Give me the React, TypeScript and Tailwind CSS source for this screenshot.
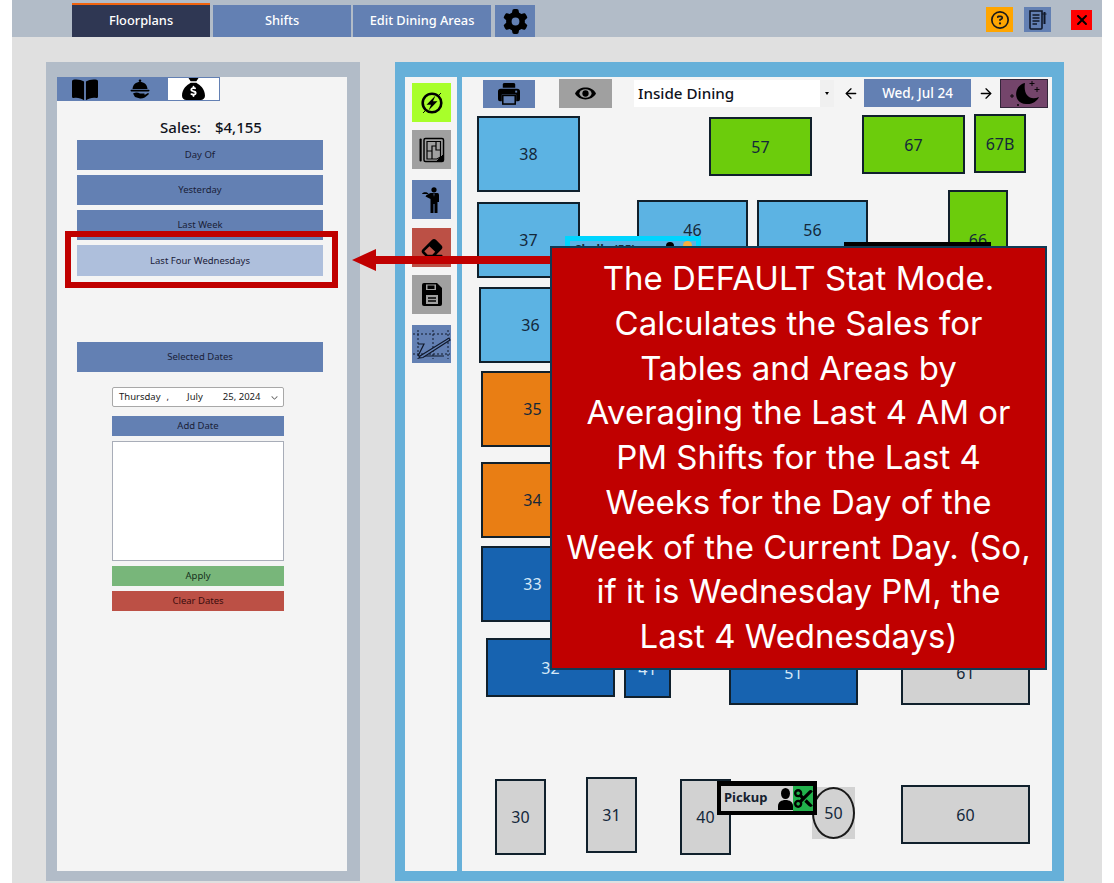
import React from "react";
import { FaSackDollar, FaGear, FaEraser, FaScissors, FaXmark, FaRegCircleQuestion, FaChevronDown } from "react-icons/fa6";
import { ArrowLeft, ArrowRight } from "lucide-react";

const BLUE = "bg-[#6380b3]";

function Book() {
  return (
    <svg width="26" height="23" viewBox="0 0 28 23">
      <path d="M13 3 C10 1 5 0 1.500 1 Q0 1.300 0 3 V19 Q0 21 2 20.600 C6 20 10 21 13 23Z" fill="#000" />
      <path d="M15 3 C18 1 23 0 26.500 1 Q28 1.300 28 3 V19 Q28 21 26 20.600 C22 20 18 21 15 23Z" fill="#000" />
    </svg>
  );
}

function Cloche() {
  return (
    <svg width="20" height="20" viewBox="0 0 20 20">
      <circle cx="10" cy="1.800" r="1.300" fill="#000" />
      <path d="M2.500 10 C2.800 5.500 6 3 10 3 C14 3 17.200 5.500 17.500 10Z" fill="#000" />
      <rect x="0.500" y="10.800" width="19" height="1.600" rx="0.800" fill="#000" />
      <path d="M3 14.500 C6 13 8 13.500 10 14.500 H14 C15 14.500 15 16 14 16 H10.500 L14.500 16 L18 14 C19 14 19 15 18.500 15.500 C16 18 13 19.800 10 19.500 L5 18Z" fill="#000" />
    </svg>
  );
}

function Bolt() {
  return (
    <svg width="26" height="26" viewBox="0 0 26 26" fill="none">
      <circle cx="13" cy="13" r="9.300" stroke="#000" strokeWidth="2.600" />
      <path d="M16.500 5.500 L7.500 14.800 H12 L9.500 20.500 L18.500 11.200 H14Z" fill="#000" />
      <path d="M4 23 L7 20 M19 6 L22 3" stroke="#000" strokeWidth="0.900" />
    </svg>
  );
}

function Plan() {
  return (
    <svg width="26" height="26" viewBox="0 0 26 26" fill="none" stroke="#000">
      <rect x="5" y="1.500" width="19.500" height="23" rx="1.500" strokeWidth="1.500" />
      <path d="M8 4.500 H21.500 V20 L18 22 H8Z M8 14 H13 V9 H17 V4.500 M17 9 V13 H21.500 M13 14 V22" strokeWidth="1.200" />
      <path d="M18 24 L24 24 L24 18Z" fill="#000" />
      <rect x="0.500" y="1.500" width="2.200" height="23" rx="1" fill="#000" stroke="none" />
    </svg>
  );
}

function Waiter() {
  return (
    <svg width="20" height="26" viewBox="0 0 20 26">
      <circle cx="12" cy="2.800" r="2.600" fill="#000" />
      <path d="M8.500 6 H15.500 Q17 6 17 8 V15 H15.500 V26 H12.500 V17 H11.500 V26 H8.500 V12 L3.500 9.500 L4.500 8Z" fill="#000" />
      <path d="M0 7 C0.500 4.500 6 4.500 6.500 7Z" fill="#000" />
      <path d="M11.500 6.500 L12 10 L12.500 6.500Z" fill="#6380b3" />
    </svg>
  );
}

function Drafting() {
  return (
    <svg width="39" height="38" viewBox="0 0 39 38" fill="none">
      <path d="M1 9 H38 M1 29 H38 M6 5 V34 M21 5 V34 M36 5 V34" stroke="#10182a" strokeWidth="1" strokeDasharray="2 2" />
      <path d="M6 31 L12 19 H6 M6 31 H32" stroke="#10182a" strokeWidth="1.200" />
      <path d="M8 31 L37 13 L38 15 L11 32.500 L7 33Z" fill="#6380b3" stroke="#10182a" strokeWidth="1.200" />
    </svg>
  );
}

function Notes() {
  return (
    <svg width="18" height="20" viewBox="0 0 18 20" fill="none" stroke="#10182a">
      <path d="M1 1 H13 V18 Q13 19 12 19 H2 Q1 19 1 18Z" strokeWidth="1.600" />
      <path d="M3.500 5 H10.500 M3.500 8 H10.500 M3.500 11 H10.500 M3.500 14 H8" strokeWidth="1.300" />
      <path d="M15.500 2 V14" strokeWidth="2" />
      <path d="M13 4 H17.500" strokeWidth="1" />
    </svg>
  );
}

function Moon() {
  return (
    <svg width="46" height="27" viewBox="1 1 46 27" fill="none">
      <path d="M25 4 C14 6 12 24 26 25 C33 25.500 37 22 39 18 C30 22 23 16 25 4Z" fill="#000" />
      <path d="M32 2 V7 M29.500 4.500 H34.500 M37 8 V13 M34.500 10.500 H39.500 M12 15 V19 M10 17 H14 M18 25 V27 M17 26 H19" stroke="#000" strokeWidth="0.900" />
    </svg>
  );
}

function Printer() {
  return (
    <svg width="22" height="22" viewBox="0 0 23 23">
      <path d="M5 1.500 Q5 0 7 0 H16 Q18 0 18 1.500 V5 H5Z" fill="#000" />
      <path d="M3 6 H20 Q23 6 23 9 V17 Q23 19 21 19 H19 V12 H4 V19 H2 Q0 19 0 17 V9 Q0 6 3 6Z" fill="#000" />
      <rect x="5" y="13" width="13" height="9" fill="#6380b3" stroke="#000" strokeWidth="1.600" />
      <rect x="18" y="8" width="2" height="2" fill="#6380b3" />
    </svg>
  );
}

function EyeIcon() {
  return (
    <svg width="21" height="13" viewBox="0 0 20 12">
      <path d="M0 6 C4 -1.500 16 -1.500 20 6 C16 13.500 4 13.500 0 6Z" fill="#000" />
      <ellipse cx="10" cy="6" rx="5.800" ry="4" fill="#a0a0a0" />
      <circle cx="10" cy="6" r="3" fill="#000" />
    </svg>
  );
}

function Floppy() {
  return (
    <svg width="20" height="23" viewBox="0 0 20 23">
      <path d="M2 0 H15 L20 5 V21 Q20 23 18 23 H2 Q0 23 0 21 V2 Q0 0 2 0Z" fill="#000" />
      <rect x="4" y="1.500" width="10" height="5.500" fill="#a0a0a0" />
      <rect x="5.500" y="2.500" width="7" height="3.500" fill="#000" />
      <rect x="4" y="12" width="12" height="9" fill="#a0a0a0" />
      <path d="M6 15 H14 M6 18 H14" stroke="#000" strokeWidth="1.300" />
    </svg>
  );
}

function Person() {
  return (
    <svg width="15" height="22" viewBox="0 0 15 22">
      <ellipse cx="7.500" cy="5.500" rx="4.500" ry="5.500" fill="#000" />
      <path d="M0 22 V18 C0 14 3.500 12 7.500 12 C11.500 12 15 14 15 18 V22Z" fill="#000" />
    </svg>
  );
}

type T = { n: string; c: string };
const tables: T[] = [
  { n: "38", c: "left-[15px] top-[39px] w-[103px] h-[76px] bg-[#5cb3e3] text-[#14283a]" },
  { n: "37", c: "left-[15px] top-[125px] w-[103px] h-[76px] bg-[#5cb3e3] text-[#14283a]" },
  { n: "36", c: "left-[17px] top-[210px] w-[103px] h-[76px] bg-[#5cb3e3] text-[#14283a]" },
  { n: "35", c: "left-[19px] top-[294px] w-[103px] h-[76px] bg-[#e97e14] text-[#14283a]" },
  { n: "34", c: "left-[19px] top-[385px] w-[103px] h-[76px] bg-[#e97e14] text-[#14283a]" },
  { n: "33", c: "left-[19px] top-[469px] w-[103px] h-[76px] bg-[#1763b0] text-[#d6e8f7]" },
  { n: "32", c: "left-[24px] top-[561px] w-[129px] h-[59px] bg-[#1763b0] text-[#d6e8f7]" },
  { n: "41", c: "left-[162px] top-[563px] w-[47px] h-[58px] bg-[#1763b0] text-[#d6e8f7]" },
  { n: "51", c: "left-[267px] top-[563px] w-[129px] h-[65px] bg-[#1763b0] text-[#d6e8f7]" },
  { n: "61", c: "left-[439px] top-[563px] w-[129px] h-[65px] bg-[#d2d2d2] text-[#14283a]" },
  { n: "46", c: "left-[175px] top-[123px] w-[111px] h-[60px] bg-[#5cb3e3] text-[#14283a]" },
  { n: "56", c: "left-[295px] top-[123px] w-[111px] h-[60px] bg-[#5cb3e3] text-[#14283a]" },
  { n: "57", c: "left-[247px] top-[40px] w-[103px] h-[59px] bg-[#6ccc0c] text-[#14283a]" },
  { n: "67", c: "left-[400px] top-[38px] w-[103px] h-[59px] bg-[#6ccc0c] text-[#14283a]" },
  { n: "67B", c: "left-[512px] top-[37px] w-[52px] h-[59px] bg-[#6ccc0c] text-[#14283a]" },
  { n: "66", c: "left-[486px] top-[113px] w-[60px] h-[100px] bg-[#6ccc0c] text-[#14283a]" },
  { n: "30", c: "left-[33px] top-[702px] w-[51px] h-[76px] bg-[#d2d2d2] text-[#14283a]" },
  { n: "31", c: "left-[124px] top-[700px] w-[51px] h-[76px] bg-[#d2d2d2] text-[#14283a]" },
  { n: "40", c: "left-[218px] top-[702px] w-[51px] h-[76px] bg-[#d2d2d2] text-[#14283a]" },
  { n: "60", c: "left-[439px] top-[708px] w-[129px] h-[59px] bg-[#d2d2d2] text-[#14283a]" },
];

const calloutLines = [
  "The DEFAULT Stat Mode.",
  "Calculates the Sales for",
  "Tables and Areas by",
  "Averaging the Last 4 AM or",
  "PM Shifts for the Last 4",
  "Weeks for the Day of the",
  "Week of the Current Day. (So,",
  "if it is Wednesday PM, the",
  "Last 4 Wednesdays)",
];

function StatButton({ label, light }: { label: string; light?: boolean }) {
  return (
    <div className={`w-[246px] flex items-center justify-center pt-[1px] text-[9.500px] text-[#1a2038] ${light ? "h-[31px] bg-[#aebfdc]" : `h-[30px] ${BLUE}`}`}>
      {label}
    </div>
  );
}

export default function App() {
  return (
    <div className="relative w-[1114px] h-[883px] bg-white pl-3 overflow-hidden font-['Noto_Sans',sans-serif]">
      <div className="w-[1090px] h-[883px] flex flex-col bg-[#e0e0e0]">
        {/* header */}
        <header className="h-[37px] shrink-0 bg-[#b2bcc8] flex items-end pl-[60px]">
          <div className="w-[138px] h-[34px] bg-[#2f3753] border-t-2 border-[#f0630f] flex items-center justify-center text-[12.800px] font-medium text-white">Floorplans</div>
          <div className={`ml-[3px] w-[138px] h-[32px] ${BLUE} flex items-center justify-center text-[12.800px] font-medium text-white`}>Shifts</div>
          <div className={`ml-[2px] w-[138px] h-[32px] ${BLUE} flex items-center justify-center text-[12.800px] font-medium text-white`}>Edit Dining Areas</div>
          <div className={`ml-[4px] w-[40px] h-[32px] ${BLUE} flex items-center justify-center`}><FaGear className="text-black text-[25px]" /></div>
          <div className="ml-auto self-start flex items-start pt-[7px] pr-[10px]">
            <div className="w-[27px] h-[25px] bg-[#ffa500] flex items-center justify-center"><FaRegCircleQuestion className="text-[18px] text-[#1a1a1a]" /></div>
            <div className={`ml-[11px] w-[27px] h-[25px] ${BLUE} flex items-center justify-center`}><Notes /></div>
            <div className="ml-[20px] mt-[3px] w-[21px] h-[20px] bg-[#ff0000] flex items-center justify-center"><FaXmark className="text-[16px] text-black" /></div>
          </div>
        </header>

        {/* body */}
        <main className="flex items-start pt-[25px] pl-[34px]">
          {/* left panel */}
          <section className="w-[314px] h-[819px] bg-[#b2bcc8] pt-[15px] pl-[11px]">
            <div className="w-[290px] h-[794px] bg-[#f4f4f4] flex flex-col items-center">
              <div className="self-start w-[163px] h-[24px] flex">
                <div className={`w-[55px] ${BLUE} flex items-center justify-center pl-[1px]`}><Book /></div>
                <div className={`w-[55px] ${BLUE} flex items-center justify-center`}><Cloche /></div>
                <div className="w-[53px] bg-white border border-[#6380b3] flex items-end justify-center overflow-hidden"><FaSackDollar className="text-[23px] text-black" /></div>
              </div>
              <div className="h-[39px] w-full flex items-end justify-center text-[15px] font-medium text-[#10131c] leading-[26px] pl-[18px]">
                <span>Sales:</span><span className="ml-[14px]">$4,155</span>
              </div>
              <div className="flex flex-col gap-[5px] mr-[4px]">
                <StatButton label="Day Of" />
                <StatButton label="Yesterday" />
                <StatButton label="Last Week" />
                <StatButton label="Last Four Wednesdays" light />
              </div>
              <div className="mt-[66px] mr-[4px]"><StatButton label="Selected Dates" /></div>
              <div className="mt-[15px] w-[172px] h-[20px] bg-white border border-[#a8a8a8] rounded-[2px] flex items-center pl-[6px] text-[9.500px] text-[#1a1a1a] mr-[8px]">
                <span>Thursday</span><span className="ml-[6px]">,</span><span className="ml-[18px]">July</span><span className="ml-[20px]">25, 2024</span>
                <FaChevronDown className="ml-auto mr-[5px] text-[7px] text-[#666]" />
              </div>
              <div className={`mt-[9px] w-[172px] h-[20px] ${BLUE} flex items-center justify-center text-[9.500px] text-[#1a2038] mr-[8px]`}>Add Date</div>
              <div className="mt-[5px] w-[172px] h-[120px] bg-white border border-[#a8adb8] mr-[8px]" />
              <div className="mt-[5px] w-[172px] h-[20px] bg-[#78b67a] flex items-center justify-center text-[9.500px] text-[#16301c] mr-[8px]">Apply</div>
              <div className="mt-[5px] w-[172px] h-[20px] bg-[#bc5045] flex items-center justify-center text-[9.500px] text-[#3a0d0d] mr-[8px]">Clear Dates</div>
            </div>
          </section>

          {/* right panel */}
          <section className="ml-[35px] w-[669px] h-[819px] bg-[#66b0d9] pt-[15px] pl-[10px] flex gap-[5px]">
            <aside className="w-[52px] h-[794px] bg-[#f4f4f4] flex flex-col items-center pt-[6px] pl-[1px]">
              <div className="w-[39px] h-[39px] bg-[#a8ff2a] flex items-center justify-center"><Bolt /></div>
              <div className="mt-[8px] w-[39px] h-[39px] bg-[#a0a0a0] flex items-center justify-center"><Plan /></div>
              <div className={`mt-[11px] w-[39px] h-[39px] ${BLUE} flex items-center justify-center`}><Waiter /></div>
              <div className="mt-[9px] w-[39px] h-[39px] bg-[#bc5045] flex items-center justify-center"><FaEraser className="text-[24px] text-black" /></div>
              <div className="mt-[8px] w-[39px] h-[39px] bg-[#a0a0a0] flex items-center justify-center"><Floppy /></div>
              <div className={`mt-[11px] w-[39px] h-[38px] ${BLUE} flex items-center justify-center`}><Drafting /></div>
            </aside>

            <div className="relative w-[590px] h-[794px] bg-[#f4f4f4]">
              {/* toolbar */}
              <div className="flex items-start pl-[21px] pt-[2px]">
                <div className={`mt-[1px] w-[52px] h-[28px] ${BLUE} flex items-center justify-center`}><Printer /></div>
                <div className="ml-[24px] w-[53px] h-[29px] bg-[#a0a0a0] flex items-center justify-center"><EyeIcon /></div>
                <div className="ml-[22px] mt-[1px] w-[200px] h-[27px] bg-white flex items-center pl-[4px] text-[15.200px] font-medium text-[#10131c]">
                  Inside Dining
                  <span className="ml-auto w-[14px] h-[27px] bg-[#f0f0f0] flex items-center justify-center">
                    <span className="w-0 h-0 border-x-[2.500px] border-x-transparent border-t-[3px] border-t-black" />
                  </span>
                </div>
                <div className="ml-[9px] mt-[6px] w-[16px] flex justify-center"><ArrowLeft size={17} strokeWidth={2} color="#000" /></div>
                <div className={`ml-[5px] w-[107px] h-[28px] ${BLUE} flex items-center justify-center text-[13.500px] font-medium text-white`}>Wed, Jul 24</div>
                <div className="ml-[7px] mt-[6px] w-[16px] flex justify-center"><ArrowRight size={17} strokeWidth={2} color="#000" /></div>
                <div className="ml-[6px] w-[48px] h-[29px] bg-[#74456b] border border-[#33263a] flex items-center justify-center overflow-hidden"><Moon /></div>
              </div>

              {/* floor plan: items placed on a free canvas */}
              {tables.map((t) => (
                <div key={t.n} className={`absolute border-2 border-[#10202c] flex items-center justify-center text-[16px] ${t.c}`}>{t.n}</div>
              ))}
              <div className="absolute left-[350px] top-[710px] w-[43px] h-[52px] bg-[#d2d2d2]">
                <div className="w-[43px] h-[52px] rounded-[50%] border-2 border-[#1a1a1a] flex items-center justify-center text-[16px] text-[#14283a]">50</div>
              </div>
              <div className="absolute left-[103px] top-[159px] w-[136px] h-[40px] border-[5px] border-[#00d5ff] bg-[#5cb3e3] pl-[5px] text-[12px] font-bold text-[#14283a]">
                Shelly (55)
                <span className="absolute left-[96px] top-[1px] w-[8px] h-[8px] rounded-full bg-black" />
                <span className="absolute left-[113px] top-[0px] w-[9px] h-[9px] rounded-full bg-[#f5b041]" />
              </div>
              <div className="absolute left-[382px] top-[165px] w-[147px] h-[30px] bg-[#d2d2d2] border-4 border-black" />
              <div className="absolute left-[255px] top-[704px] w-[100px] h-[34px] bg-[#d2d2d2] border-x-4 border-t-[5px] border-b-4 border-black flex items-center pl-[3px] text-[13px] font-bold text-[#14202e]">
                <span className="leading-[20px] mb-[4px]">Pickup</span>
                <span className="ml-auto shrink-0 flex"><Person /></span>
                <span className="w-[20px] h-[25px] bg-[#22b14c] flex items-center justify-center shrink-0 overflow-hidden"><FaScissors className="text-[19px] text-black shrink-0" /></span>
              </div>
            </div>
          </section>
        </main>
      </div>

      {/* annotation overlays */}
      <div className="absolute left-[65px] top-[231px] w-[273px] h-[57px] border-[6px] border-[#c00000]" />
      <div className="absolute left-[375px] top-[256px] w-[176px] h-[8px] bg-[#c00000]" />
      <div className="absolute left-[352px] top-[249px] w-0 h-0 border-y-[11px] border-y-transparent border-r-[24px] border-r-[#c00000]" />
      <div className="absolute left-[550px] top-[246px] w-[497px] h-[424px] bg-[#c00000] border-2 border-[#0f3a55] flex flex-col items-center pt-[8px] text-[33px] leading-[44.750px] text-white font-['Inter',sans-serif]">
        {calloutLines.map((l) => (
          <div key={l} className="whitespace-nowrap">{l}</div>
        ))}
      </div>
    </div>
  );
}
